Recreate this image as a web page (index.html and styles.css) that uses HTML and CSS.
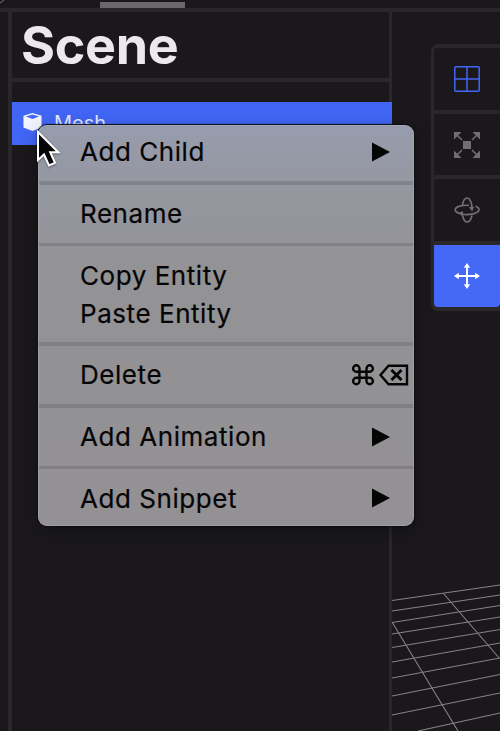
FILE: index.html
```
<!DOCTYPE html>
<html lang="en">
<head>
<meta charset="utf-8">
<title>Scene</title>
<link rel="stylesheet" href="styles.css">
</head>
<body>
<div class="app">
  <header class="topbar"><svg class="corner" viewBox="0 0 6 5"><path d="M0 3 4 0"/></svg><div class="tab"></div></header>
  <div class="workspace">
    <aside class="panel">
      <h1 class="title">Scene</h1>
      <div class="row">
        <svg class="cube" viewBox="0 0 20 20"><path d="M10 .4 19.500 3.500V15.700L10 19.400.5 15.700V3.500Z" fill="#f4f4ff"/><path d="M10 2 17 4.200 10 6.900 3 4.200Z" fill="#4166f5"/></svg>
        <span class="mesh">Mesh</span>
      </div>
    </aside>
    <main class="viewport">
      <nav class="tools">
        <div class="tool"><svg viewBox="0 0 26 26" class="grid-icon"><rect x=".8" y=".8" width="24.4" height="24.4" rx="1"/><path d="M13 1v24M1 13h24"/></svg></div>
        <div class="tool"><svg viewBox="0 0 26 26" class="scale-icon"><path d="M9 9h8v8H9z"/><path d="M0 0h7.500L0 7.500zM26 0v7.500L18.500 0zM0 26v-7.500L7.500 26zM26 26h-7.500L26 18.500z"/><path class="line" d="M3 3 8 8M23 3 18 8M3 23 8 18M23 23 18 18"/></svg></div>
        <div class="tool"><svg viewBox="0 0 26 26" class="rotate-icon"><path d="M8.500 8C9 4 11 1 13.500 1c2 0 4 4 4.500 9M18 18.500c-1 4-2.500 6.500-5 6.500-2 0-3.500-2.500-4.300-6M15 8.300C8 8 1.500 9.500 1.200 12.500c-.2 2 2 3.200 4.300 3.800M7 17c8 1.500 18-.5 18-4.500 0-1.500-1.500-2.500-3.500-3.200"/><path class="solid" d="m15 10 5-.2-1.800 5zM9 14v5.500l-5-3.200z"/></svg></div>
        <div class="tool active"><svg viewBox="0 0 26 26" class="move-icon"><path class="line" d="M13 3v20M3 13h20"/><path d="m13 0 3.200 4.800H9.800zM13 26l-3.200-4.800h6.400zM0 13l4.800-3.200v6.400zM26 13l-4.800 3.200V9.800z"/></svg></div>
      </nav>
      <svg class="floor" viewBox="0 0 108 161"><path d="M0 30.500 108 15M0 41 108 25M0 52.500 108 35.500M0 64 108 47M0 77.500 108 59.500M0 92 108 73M0 108 108 88M0 126 108 104.500M0 145 108 123M26 161l82-18M51 23l57 66M0 52 66 161"/></svg>
    </main>
  </div>
</div>
<div class="menu">
  <div class="item"><span>Add Child</span><svg class="arrow" viewBox="0 0 18 20"><path d="M0 .5 18 10 0 19.500z"/></svg></div>
  <div class="sep"></div>
  <div class="item"><span>Rename</span></div>
  <div class="sep"></div>
  <div class="item"><span>Copy Entity</span></div>
  <div class="item"><span>Paste Entity</span></div>
  <div class="sep"></div>
  <div class="item"><span>Delete</span>
    <svg class="keys" viewBox="0 0 58 24"><path d="M8.500 5.500v12.500a3.200 3.200 0 1 1-3.200-3.200h13.400a3.200 3.200 0 1 1-3.200 3.200V5.500a3.200 3.200 0 1 1 3.200 3.200H5.300A3.200 3.200 0 1 1 8.500 5.500z"/><path d="M37.500 2.700H56v18.600H37.500L29.500 12z"/><path class="cross" d="M40.500 7l10 10M50.500 7l-10 10"/></svg></div>
  <div class="sep"></div>
  <div class="item"><span>Add Animation</span><svg class="arrow" viewBox="0 0 18 20"><path d="M0 .5 18 10 0 19.500z"/></svg></div>
  <div class="sep"></div>
  <div class="item"><span>Add Snippet</span><svg class="arrow" viewBox="0 0 18 20"><path d="M0 .5 18 10 0 19.500z"/></svg></div>
</div>
<svg class="cursor" viewBox="0 0 24 38"><path d="M2 2v28l6-5.500 5 11 6-2.700-4.800-10.600h8z"/></svg>
</body>
</html>
```
FILE: styles.css
```
* { box-sizing: border-box; }
body {
  margin: 0;
  width: 500px;
  height: 731px;
  overflow: hidden;
  background: #1a181b;
  font-family: Inter, "Liberation Sans", sans-serif;
}
svg { display: block; flex: none; }
.app { height: 731px; display: flex; flex-direction: column; }
.topbar {
  height: 12px;
  flex: none;
  display: flex;
  border-bottom: 4px solid #29272a;
}
.corner { width: 6px; height: 5px; stroke: #777; fill: none; }
.tab { width: 85px; height: 6px; margin: 2px 0 0 94px; background: #69676a; }
.workspace { flex: 1; display: flex; min-height: 0; }
.panel {
  width: 384px;
  margin-left: 8px;
  border-left: 4px solid #29272a;
  border-right: 3px solid #29272a;
}
.title {
  margin: 0;
  height: 70px;
  border-bottom: 4px solid #29272a;
  padding-left: 9px;
  color: #ebe9ed;
  font-size: 52px;
  line-height: 68px;
  font-weight: 700;
  letter-spacing: -.3px;
}
.row {
  margin: 20px -3px 0 0;
  height: 43px;
  background: #4166f5;
  display: flex;
  padding: 10px 0 0 11px;
}
.cube { width: 19px; height: 20px; }
.mesh { margin-left: 12px; color: #e3e7ff; font-size: 20px; line-height: 22px; letter-spacing: 0; }
.viewport {
  flex: 1;
  display: flex;
  flex-direction: column;
  justify-content: space-between;
  overflow: hidden;
}
.tools {
  margin: 32px 0 0 39px;
  width: 73px;
  border: 4px solid #29272a;
  border-left-width: 3px;
  border-radius: 7px;
}
.tool {
  height: 65.700px;
  border-bottom: 4px solid #29272a;
  padding: 18px 0 0 20px;
}
.tool svg { width: 26px; height: 26px; }
.tool.active { height: 62px; border: 0; border-radius: 0 0 4px 4px; background: #4568f7; }
.grid-icon { fill: none; stroke: #4166f5; stroke-width: 1.500; }
.scale-icon { fill: #706e71; }
.scale-icon .line { stroke: #706e71; stroke-width: 1.500; }
.rotate-icon { fill: none; stroke: #706e71; stroke-width: 1.700; }
.rotate-icon .solid { fill: #706e71; stroke: none; }
.move-icon { fill: #fff; }
.move-icon .line { stroke: #fff; stroke-width: 2; }
.floor { width: 108px; height: 161px; fill: none; stroke: #858386; stroke-width: 1.100; }
.menu {
  position: absolute;
  left: 38px;
  top: 125px;
  width: 376px;
  height: 401px;
  padding-top: 8px;
  border-radius: 9px;
  background: linear-gradient(#979cad, #95979f 70px, #939295 150px, #939193);
  box-shadow: inset 0 0 0 1px rgba(190, 190, 196, .3), 0 0 1px 1px #100f11, 0 5px 18px rgba(0, 0, 0, .3);
  color: #050506;
  font-size: 26px;
  letter-spacing: .55px;
  -webkit-text-stroke: .2px #050506;
}
.item {
  height: 37.900px;
  display: flex;
  align-items: center;
  justify-content: space-between;
  padding: 0 24px 0 42px;
  white-space: nowrap;
}
.sep { height: 3.800px; margin: 10px 1px; background: rgba(70, 70, 76, .23); }
.arrow { width: 18px; height: 20px; fill: #050506; }
.keys { width: 58px; height: 24px; margin-right: -19px; fill: none; stroke: #050506; stroke-width: 2.400; }
.keys .cross { stroke-width: 3; }
.cursor {
  position: absolute;
  left: 36px;
  top: 130px;
  width: 24px;
  height: 38px;
  fill: #050506;
  stroke: #fff;
  stroke-width: 2;
  filter: drop-shadow(0 1px 1px rgba(0, 0, 0, .4));
}
```
